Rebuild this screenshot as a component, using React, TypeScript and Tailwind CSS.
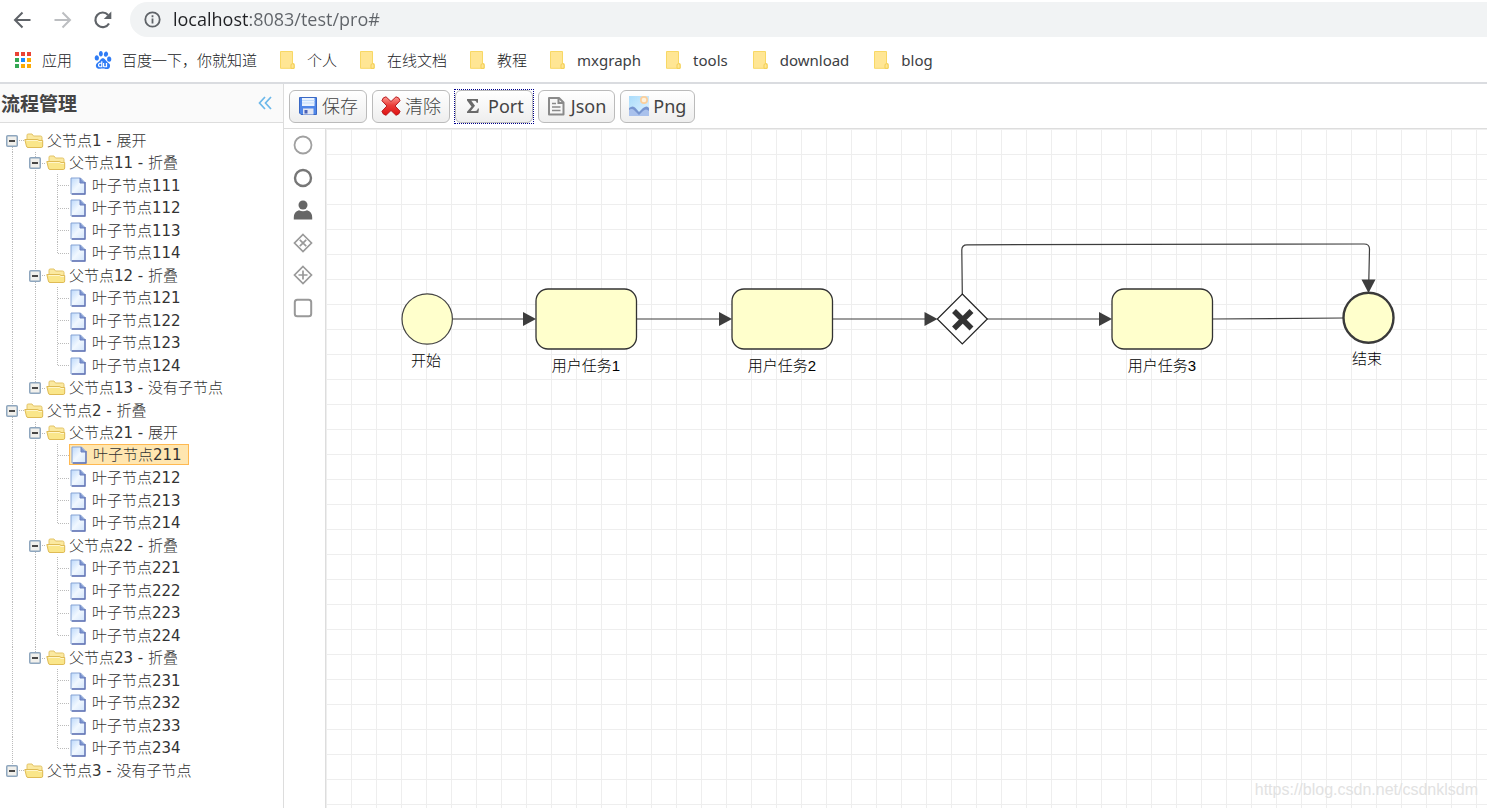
import { useState, type ReactNode } from "react";
import { SiBaidu } from "react-icons/si";

/* ---------- icons ---------- */

const BookmarkFolder = () => (
  <svg width="18" height="18" viewBox="0 0 18 18" aria-hidden="true">
    <path d="M1.500 .5h12v12.200h1.600v4.600H1.500z" fill="#ffe694" stroke="#f8d865" strokeWidth="1" />
    <path d="M12 17.300v-3.200q0-1.400 1.500-1.400t1.600 1.400v3.200z" fill="#ffe694" stroke="#f3cf55" />
  </svg>
);

const appColors = ["#ea4335", "#ea4335", "#ea4335", "#34a853", "#1a8cff", "#fbab05", "#34a853", "#fbab05", "#fbab05"];
const AppsIcon = () => (
  <svg width="18" height="18" viewBox="0 0 18 18" aria-hidden="true">
    {appColors.map((c, i) => (
      <rect key={i} x={1 + (i % 3) * 6} y={1 + Math.floor(i / 3) * 6} width="4" height="4" fill={c} />
    ))}
  </svg>
);

const SaveIcon = () => (
  <svg width="20" height="20" viewBox="0 0 20 20" aria-hidden="true">
    <path d="M1.500 1.500h17v17H3L1.500 17z" fill="#4f86e8" stroke="#3a68c4" />
    <rect x="4" y="2" width="12.500" height="8" fill="#eaf3ff" />
    <path d="M4 4.500h12.500M4 7h12.500" stroke="#c3dcfa" strokeWidth="1" />
    <rect x="5" y="12.500" width="10.500" height="6" fill="#e3e6f2" />
    <rect x="6.500" y="14" width="3" height="3.500" fill="#4a62b8" />
  </svg>
);

const ClearIcon = () => (
  <svg width="20" height="20" viewBox="0 0 22 20" preserveAspectRatio="none" aria-hidden="true">
    <defs>
      <linearGradient id="clear" x1="0" y1="0" x2="0" y2="1">
        <stop offset="0" stopColor="#ff9a92" />
        <stop offset=".45" stopColor="#ea3f3a" />
        <stop offset="1" stopColor="#e01010" />
      </linearGradient>
    </defs>
    <path
      d="M5.500 .8 11 5.500 16.500 .8q3.500 .2 4.500 3.900L15.500 10l5.500 5.300q-1 3.500-4.500 4L11 14.500l-5.500 4.800q-3.500-.5-4.500-4L6.500 10 1 4.700Q2 1 5.500 .8z"
      fill="url(#clear)"
      stroke="#b5161a"
      strokeLinejoin="round"
    />
  </svg>
);

const SumIcon = () => (
  <svg width="20" height="20" viewBox="0 0 20 20" aria-hidden="true">
    <path d="M3 3h11v3.800h-1.300q-.3-2-2.200-2H7.300l3.700 4.900-4.200 5.300h4.400q2.200 0 2.700-2.500H15L14.300 17H3v-1.300L7.500 10.500 3 4.500z" fill="#6a6a6a" />
  </svg>
);

const DocIcon = () => (
  <svg width="20" height="20" viewBox="0 0 20 20" aria-hidden="true" fill="none" stroke="#8a8a8a">
    <path d="M2 2h10l4.500 4.500v12H2z" fill="#f7f7f7" strokeWidth="2" strokeLinejoin="round" />
    <path d="M11.500 2v5h5" strokeWidth="2" />
    <path d="M5 7.500h4M5 11h8.500M5 14.500h8.500" strokeWidth="1.500" />
  </svg>
);

const ImageIcon = () => (
  <svg width="20" height="20" viewBox="0 0 20 20" aria-hidden="true">
    <defs>
      <linearGradient id="sky" x1="0" y1="0" x2="1" y2="1">
        <stop offset="0" stopColor="#a9dcfb" />
        <stop offset="1" stopColor="#e4f3fe" />
      </linearGradient>
    </defs>
    <rect width="20" height="20" fill="url(#sky)" />
    <circle cx="15" cy="4" r="4" fill="#fbcf9c" />
    <circle cx="15" cy="4" r="2.300" fill="#fff2dc" />
    <path d="M0 12q4-3 6.500 0L10 16l4-4q4-3 6 0v8H0z" fill="#7795d0" />
    <path d="M0 14q3-2 5.500 .5L10 19l4-4q3-3 6 0v5H0z" fill="#a9c1ec" />
  </svg>
);

const TreeFolder = () => (
  <svg width="20" height="18" viewBox="0 0 20 18" className="shrink-0" aria-hidden="true">
    <path d="M3 12V3.200Q3 2 4.200 2H8l1.500 2H16.500q1.500 0 1.500 1.500V14z" fill="#fbe9a0" stroke="#e3c468" />
    <path d="M.8 7.500h13l1.200 1h3.700V14q0 1.500-1.500 1.500H4q-1.300 0-1.600-1.500z" fill="#fae68a" stroke="#dfbb55" />
    <path d="M2.500 8.500H13.500l1.200 1H18" stroke="#fff6cc" fill="none" />
  </svg>
);

const TreeFile = () => (
  <svg width="17" height="18" viewBox="0 0 17 18" className="shrink-0" aria-hidden="true">
    <defs>
      <linearGradient id="file" x1="0" y1="0" x2="1" y2="1">
        <stop offset="0" stopColor="#bcd8fb" />
        <stop offset=".5" stopColor="#f1f8ff" />
        <stop offset="1" stopColor="#d2e4fa" />
      </linearGradient>
    </defs>
    <path d="M2 1h9.500L16 5.500V17H2z" fill="url(#file)" stroke="#86a3d4" />
    <path d="M11 1v5h5" fill="#7d95d0" stroke="#6a80c0" />
    <path d="M16 5v12H3" fill="none" stroke="#6474b4" strokeWidth="1.300" />
  </svg>
);

/* ---------- tree ---------- */

type Guide = "blank" | "line" | "tee" | "end";
type Row = { id: string; text: string; guides: Guide[]; parents: string[]; leaf: boolean };

const groups = [
  { id: "1", note: "展开", kids: [["11", "折叠"], ["12", "折叠"], ["13", "没有子节点"]] },
  { id: "2", note: "折叠", kids: [["21", "展开"], ["22", "折叠"], ["23", "折叠"]] },
  { id: "3", note: "没有子节点", kids: [] },
];

const rows: Row[] = groups.flatMap((g, gi) => {
  const lastGroup = gi === groups.length - 1;
  const top: Guide = lastGroup ? "end" : "tee";
  const out: Row[] = [{ id: g.id, text: `父节点${g.id} - ${g.note}`, guides: [top], parents: [], leaf: false }];
  g.kids.forEach(([id, note], ki) => {
    const lastKid = ki === g.kids.length - 1;
    out.push({ id, text: `父节点${id} - ${note}`, guides: ["line", lastKid ? "end" : "tee"], parents: [g.id], leaf: false });
    if (id === "13") return;
    for (let n = 1; n <= 4; n++) {
      out.push({
        id: id + n,
        text: `叶子节点${id}${n}`,
        guides: ["line", lastKid ? "blank" : "line", n === 4 ? "end" : "tee"],
        parents: [g.id, id],
        leaf: true,
      });
    }
  });
  return out;
});

const GuideLines = ({ kind, first }: { kind: Guide; first?: boolean }) => (
  <svg width="23" height="23" className="col-start-1 row-start-1 block" aria-hidden="true" stroke="#bbb" strokeDasharray="1 1">
    {kind !== "blank" && <line x1="11.500" x2="11.500" y1={first ? 12 : 0} y2={kind === "end" ? 12 : 23} />}
    {(kind === "tee" || kind === "end") && <line x1="12" x2="23" y1="11.500" y2="11.500" />}
  </svg>
);

const Toggle = ({ open }: { open: boolean }) => (
  <svg width="12" height="12" viewBox="0 0 12 12" aria-hidden="true">
    <rect x=".75" y=".75" width="10.500" height="10.500" rx="1" fill="#f1f0ec" stroke="#8ea6be" strokeWidth="1.500" />
    <path d="M3 6h6" stroke="#111" strokeWidth="1.500" />
    {!open && <path d="M6 3v6" stroke="#111" strokeWidth="1.500" />}
  </svg>
);

function Tree() {
  const [closed, setClosed] = useState<string[]>([]);
  const [selected, setSelected] = useState("211");
  const toggle = (id: string) => setClosed((c) => (c.includes(id) ? c.filter((x) => x !== id) : [...c, id]));

  return (
    <ul role="tree" aria-label="流程管理" className="pt-[6px] pl-px font-['DejaVu_Sans','Noto_Sans_CJK_SC_Light','Noto_Sans_CJK_SC',sans-serif] text-[15px] leading-[20px] text-[#333]">
      {rows
        .filter((r) => !r.parents.some((p) => closed.includes(p)))
        .map((r) => (
          <li key={r.id} role="treeitem" aria-level={r.guides.length} aria-selected={r.id === selected} className="flex odd:h-[23px] even:h-[22px]">
            {r.guides.map((kind, i) => {
              const own = i === r.guides.length - 1;
              return (
                <span key={i} className="grid h-full shrink-0 grid-cols-1 grid-rows-1 overflow-hidden odd:w-[23px] even:w-[22px]">
                  <GuideLines kind={kind} first={r.id === "1"} />
                  {own && !r.leaf && (
                    <button
                      type="button"
                      aria-label={r.text}
                      onClick={() => toggle(r.id)}
                      className="z-10 col-start-1 row-start-1 flex items-center pl-[5px]"
                    >
                      <Toggle open={!closed.includes(r.id)} />
                    </button>
                  )}
                </span>
              );
            })}
            <button
              type="button"
              onClick={() => setSelected(r.id)}
              className={
                r.id === selected
                  ? "flex h-[21px] items-center border border-[#ffb951] bg-[#ffe6b0] pr-[6px] whitespace-nowrap"
                  : "flex items-center whitespace-nowrap"
              }
            >
              <span className="flex w-[23px] shrink-0">{r.leaf ? <TreeFile /> : <TreeFolder />}</span>
              {r.text}
            </button>
          </li>
        ))}
    </ul>
  );
}

/* ---------- browser bars ---------- */

const bookmarks: { label: string; icon: ReactNode; latin?: boolean }[] = [
  { label: "应用", icon: <AppsIcon /> },
  { label: "百度一下，你就知道", icon: <SiBaidu size={18} color="#2f7cf6" /> },
  { label: "个人", icon: <BookmarkFolder /> },
  { label: "在线文档", icon: <BookmarkFolder /> },
  { label: "教程", icon: <BookmarkFolder /> },
  { label: "mxgraph", icon: <BookmarkFolder />, latin: true },
  { label: "tools", icon: <BookmarkFolder />, latin: true },
  { label: "download", icon: <BookmarkFolder />, latin: true },
  { label: "blog", icon: <BookmarkFolder />, latin: true },
];

function BrowserBars() {
  return (
    <header className="border-b-2 border-[#dadce0]">
      <div className="flex h-[39px] items-center pl-[12px]">
        <button type="button" aria-label="后退" className="mr-[20px]">
          <svg width="20" height="20" viewBox="0 0 20 20" fill="none" stroke="#5f6368" strokeWidth="2">
            <path d="M18.500 10H3M10.500 2.500 3 10l7.500 7.500" />
          </svg>
        </button>
        <button type="button" aria-label="前进" className="mr-[20px]">
          <svg width="20" height="20" viewBox="0 0 20 20" fill="none" stroke="#bcbec1" strokeWidth="2">
            <path d="M2.500 10H18M10.500 2.500 18 10l-7.500 7.500" />
          </svg>
        </button>
        <button type="button" aria-label="重新加载" className="mr-[18px]">
          <svg width="20" height="20" viewBox="0 0 20 20">
            <path d="M17 13.500A7.300 7.300 0 1 1 16.100 4.900" fill="none" stroke="#5f6368" strokeWidth="2.200" />
            <path d="M19.300 1.500V9h-7.500z" fill="#5f6368" />
          </svg>
        </button>
        <label className="flex h-[35px] flex-1 items-center gap-[12px] rounded-l-full bg-[#f1f3f4] pl-[14px]">
          <svg width="17" height="17" viewBox="0 0 17 17" fill="none" stroke="#5f6368" strokeWidth="1.800" aria-hidden="true">
            <circle cx="8.500" cy="8.500" r="7.200" />
            <path d="M8.500 7.500v5M8.500 4.300v1.900" />
          </svg>
          <input
            aria-label="地址"
            defaultValue="localhost:8083/test/pro#"
            className="min-w-0 flex-1 bg-[linear-gradient(to_right,#202124_76px,#5f6368_76px)] bg-clip-text pb-[2px] font-['Open_Sans',sans-serif] text-[18px] leading-[26px] text-transparent caret-[#202124] outline-none"
          />
        </label>
      </div>
      <nav className="flex h-[43px] items-center gap-[22px] pb-[2px] pl-[14px] font-['Noto_Sans','Noto_Sans_CJK_SC',sans-serif] text-[15px] leading-[22px] text-[#3c4043]">
        {bookmarks.map((b) => (
          <a
            key={b.label}
            href="#"
            className={b.latin ? "flex items-center gap-[10px] pr-[2px] whitespace-nowrap" : "flex items-center gap-[10px] font-light whitespace-nowrap text-[#202124]"}
          >
            {b.icon}
            {b.label}
          </a>
        ))}
      </nav>
    </header>
  );
}

/* ---------- editor ---------- */

const tools = [
  { label: "保存", icon: <SaveIcon />, weight: "font-light" },
  { label: "清除", icon: <ClearIcon />, weight: "font-light" },
  { label: "Port", icon: <SumIcon />, weight: "font-normal" },
  { label: "Json", icon: <DocIcon />, weight: "font-normal" },
  { label: "Png", icon: <ImageIcon />, weight: "font-normal" },
];

function Toolbar() {
  return (
    <div className="flex h-[45px] items-center gap-[5px] border-b border-[#ddd] pl-[5px] font-['Noto_Sans','Noto_Sans_CJK_SC',sans-serif] text-[18px] leading-[26px] text-[#444]">
      {tools.map((t) => (
        <button key={t.label} type="button" className={t.label === "Port" ? "outline-1 outline-dotted outline-[#00008b]" : "outline-none"}>
          <span className={`flex h-[33px] items-center gap-[4px] rounded-[6px] border border-[#bbb] bg-linear-to-b from-white to-[#eee] px-[8px] ${t.weight}`}>
            {t.icon}
            {t.label}
          </span>
        </button>
      ))}
    </div>
  );
}

const palette: { name: string; icon: ReactNode }[] = [
  { name: "开始", icon: <circle cx="10" cy="10" r="8.500" stroke="#a0a0a0" strokeWidth="1.800" /> },
  { name: "结束", icon: <circle cx="10" cy="10" r="8" stroke="#777" strokeWidth="2.400" /> },
  {
    name: "用户任务",
    icon: (
      <g fill="#666" stroke="none">
        <circle cx="10" cy="5" r="4.500" />
        <path d="M.8 19.500v-2q0-6 5.200-7.300 4 2.300 8 0 5.200 1.300 5.200 7.300v2z" />
      </g>
    ),
  },
  { name: "排他网关", icon: <path d="M10 1.500 18.500 10 10 18.500 1.500 10zM6.800 6.800l6.400 6.400M13.200 6.800l-6.400 6.400" stroke="#999" strokeWidth="1.700" /> },
  { name: "并行网关", icon: <path d="M10 1.500 18.500 10 10 18.500 1.500 10zM10 5.500v9M5.500 10h9" stroke="#999" strokeWidth="1.700" /> },
  { name: "任务", icon: <rect x="1.800" y="1.800" width="16.400" height="16.400" rx="2.500" stroke="#999" strokeWidth="2" /> },
];

const Palette = () => (
  <div className="w-[42px] shrink-0 border-r border-[#ddd] pt-[6px] pl-[9px]">
    <div className="flex h-[183px] flex-col justify-between">
      {palette.map((p) => (
        <button key={p.name} type="button" aria-label={p.name} className="w-[20px]">
          <svg width="20" height="20" viewBox="0 0 20 20" fill="none" className="block">
            {p.icon}
          </svg>
        </button>
      ))}
    </div>
  </div>
);

const taskNodes = [
  { x: 210, label: "用户任务1" },
  { x: 406, label: "用户任务2" },
  { x: 786, label: "用户任务3" },
];

const Diagram = () => (
  <svg className="absolute inset-0 h-full w-full" role="img" aria-label="流程图">
    <g fill="none" stroke="#3d3d3d" strokeWidth="1.200">
      <path d="M126.500 190H198M310 190H394M506 190H600M661 190H775M886 190L1017 189" />
      <path d="M636.300 165L635.800 121Q635.800 115.800 641 115.800L1038 115Q1043.500 115 1043.500 120L1042.800 152" />
    </g>
    <g fill="#3d3d3d">
      {[210, 406, 611.5, 786].map((x) => (
        <path key={x} d={`M${x} 190l-13-7v14z`} />
      ))}
      <path d="M1042.500 164l-7-13.500h14z" />
    </g>
    <circle cx="101.200" cy="190" r="25.200" fill="#ffffcc" stroke="#444" strokeWidth="1.200" />
    {taskNodes.map((t) => (
      <rect key={t.x} x={t.x} y="160" width="100.500" height="60" rx="12" fill="#ffffcc" stroke="#333" strokeWidth="1.300" />
    ))}
    <path d="M636.300 165l25 25-25 25-25-25z" fill="#fff" stroke="#222" strokeWidth="1.200" />
    <path d="M628 182l17.500 17.500M645.500 182L628 199.500" stroke="#333" strokeWidth="5.500" />
    <circle cx="1042.500" cy="188.700" r="25" fill="#ffffcc" stroke="#3a3a3a" strokeWidth="2.400" />
    <g className="fill-black font-['Liberation_Sans','Noto_Sans_CJK_SC_Light','Noto_Sans_CJK_SC',sans-serif] text-[15px]" textAnchor="middle">
      <text x="100" y="237">开始</text>
      {taskNodes.map((t) => (
        <text key={t.x} x={t.x + 50} y="242">{t.label}</text>
      ))}
      <text x="1041" y="235">结束</text>
    </g>
  </svg>
);

export default function App() {
  return (
    <div className="flex min-h-screen flex-col bg-white">
      <BrowserBars />
      <div className="flex flex-1">
        <aside className="w-[284px] shrink-0 border-r border-[#ddd]">
          <div className="flex h-[39px] items-center justify-between border-b border-[#ddd] bg-[#fafafa] pr-[10px] pl-px">
            <h1 className="font-['Noto_Sans_CJK_SC',sans-serif] text-[19px] leading-[26px] font-bold text-[#444]">流程管理</h1>
            <button type="button" aria-label="收起">
              <svg width="16" height="14" viewBox="0 0 16 14" fill="none" stroke="#6cb8ea" strokeWidth="1.700">
                <path d="M8 1 2.500 7 8 13M14 1 8.500 7 14 13" />
              </svg>
            </button>
          </div>
          <Tree />
        </aside>
        <section className="flex min-w-0 flex-1 flex-col">
          <Toolbar />
          <div className="flex flex-1">
            <Palette />
            <main className="relative min-w-0 flex-1 overflow-hidden bg-[linear-gradient(to_right,#eee_1px,transparent_1px),linear-gradient(to_bottom,#eee_1px,transparent_1px)] bg-size-[25px_25px]">
              <Diagram />
              <p className="absolute right-[9px] bottom-[8px] font-['Liberation_Sans',sans-serif] text-[16px] leading-[20px] text-[#e2e2e2]">
                https://blog.csdn.net/csdnklsdm
              </p>
            </main>
          </div>
        </section>
      </div>
    </div>
  );
}
